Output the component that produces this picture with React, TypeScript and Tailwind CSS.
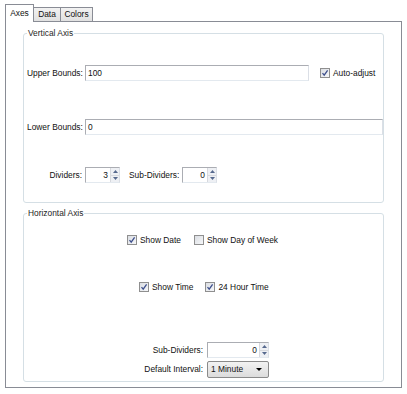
import React from 'react';

const Check = ({ checked }: { checked: boolean }) => (
  <svg width="10" height="10" viewBox="0 0 10 10" className="shrink-0">
    <defs>
      <linearGradient id="cbg" x1="0" y1="0" x2="1" y2="1">
        <stop offset="0" stopColor="#d9dce1" />
        <stop offset="1" stopColor="#f7f8fa" />
      </linearGradient>
    </defs>
    <rect x="0.5" y="0.5" width="9" height="9" fill="url(#cbg)" stroke="#8f8f8f" />
    {checked && <path d="M2.5 5.2 L4.2 7.2 L7.6 2.4" fill="none" stroke="#3d4f8c" strokeWidth="1.3" />}
  </svg>
);

const CheckLabel = ({ checked, label }: { checked: boolean; label: string }) => (
  <div className="flex items-center gap-[3px] whitespace-nowrap">
    <Check checked={checked} />
    <span>{label}</span>
  </div>
);

const TextBox = ({ value, className }: { value: string; className: string }) => (
  <div className={`h-[16px] border border-[#abadb3] border-b-[#e3e9ef] border-r-[#dbdfe6] bg-white flex items-center pl-[2px] ${className}`}>
    {value}
  </div>
);

const Spinner = ({ value, className }: { value: string; className: string }) => (
  <div className={`h-[16px] flex border border-[#abadb3] border-b-[#e3e9ef] border-r-[#dbdfe6] bg-white ${className}`}>
    <div className="flex-1 flex items-center justify-end pr-[2px]">{value}</div>
    <div className="w-[9px] flex flex-col border-l border-[#d7d9de]">
      <div className="flex-1 flex items-center justify-center bg-[#eef0f4] border-b border-[#d7d9de]">
        <svg width="5" height="3" viewBox="0 0 5 3"><path d="M0 3 L2.5 0 L5 3 Z" fill="#56698e" /></svg>
      </div>
      <div className="flex-1 flex items-center justify-center bg-[#eef0f4]">
        <svg width="5" height="3" viewBox="0 0 5 3"><path d="M0 0 L2.5 3 L5 0 Z" fill="#56698e" /></svg>
      </div>
    </div>
  </div>
);

const Group = ({ title, className, children }: { title: string; className: string; children: React.ReactNode }) => (
  <div className={`relative border border-[#d5dfe5] rounded-[3px] ${className}`}>
    <span className="absolute left-[3px] -top-[7px] px-[1px] bg-white leading-[13px] text-[#1e1e1e] whitespace-nowrap">{title}</span>
    {children}
  </div>
);

export default function App() {
  return (
    <div className="w-[407px] h-[394px] bg-white text-[8.4px] text-[#111] font-['Liberation_Sans',Arial,sans-serif] leading-none whitespace-nowrap">
      {/* tab strip */}
      <div className="flex items-end h-[21px] pl-[5px]">
        <div className="relative z-10 -mb-px w-[29px] h-[18px] border border-b-0 border-[#898c95] bg-white flex items-start justify-center pt-[4px]">
          Axes
        </div>
        <div className="w-[27px] h-[14px] border border-l-0 border-b-0 border-[#898c95] bg-gradient-to-b from-[#f2f2f2] to-[#e1e1e1] flex items-center justify-center">
          Data
        </div>
        <div className="w-[32px] h-[14px] border border-l-0 border-b-0 border-[#898c95] bg-gradient-to-b from-[#f2f2f2] to-[#e1e1e1] flex items-center justify-center">
          Colors
        </div>
      </div>

      {/* tab panel */}
      <div className="mx-[5px] h-[367px] border border-[#898c95] px-[17px]">
        <Group title="Vertical Axis" className="mt-[11px] h-[170px]">
          <div className="pl-[3px] pt-[31px]">
            <div className="flex items-center h-[16px]">
              <span className="w-[58px]">Upper Bounds:</span>
              <TextBox value="100" className="w-[224px]" />
              <div className="ml-[11px]">
                <CheckLabel checked label="Auto-adjust" />
              </div>
            </div>
            <div className="flex items-center h-[16px] mt-[38px]">
              <span className="w-[58px]">Lower Bounds:</span>
              <TextBox value="0" className="w-[298px]" />
            </div>
            <div className="flex items-center h-[16px] mt-[32px]">
              <span className="w-[58px] text-right pr-[3px]">Dividers:</span>
              <Spinner value="3" className="w-[35px]" />
              <span className="ml-[9px] w-[53px]">Sub-Dividers:</span>
              <Spinner value="0" className="w-[35px]" />
            </div>
          </div>
        </Group>

        <Group title="Horizontal Axis" className="mt-[10px] h-[169px]">
          <div className="flex items-center h-[12px] mt-[20px] pl-[103px] gap-[13px]">
            <CheckLabel checked label="Show Date" />
            <CheckLabel checked={false} label="Show Day of Week" />
          </div>
          <div className="flex items-center h-[12px] mt-[35px] pl-[115px] gap-[12px]">
            <CheckLabel checked label="Show Time" />
            <CheckLabel checked label="24 Hour Time" />
          </div>
          <div className="flex items-center h-[16px] mt-[49px]">
            <span className="w-[183px] text-right pr-[4px]">Sub-Dividers:</span>
            <Spinner value="0" className="w-[62px]" />
          </div>
          <div className="flex items-center h-[17px] mt-[3px]">
            <span className="w-[183px] text-right pr-[4px]">Default Interval:</span>
            <div className="w-[62px] h-[17px] border border-[#8a8a8a] rounded-[2px] bg-gradient-to-b from-[#f2f2f2] to-[#dcdcdc] flex items-center justify-between pl-[3px] pr-[6px]">
              <span>1 Minute</span>
              <svg width="6" height="3" viewBox="0 0 6 3"><path d="M0 0 L3 3 L6 0 Z" fill="#000" /></svg>
            </div>
          </div>
        </Group>
      </div>
    </div>
  );
}
